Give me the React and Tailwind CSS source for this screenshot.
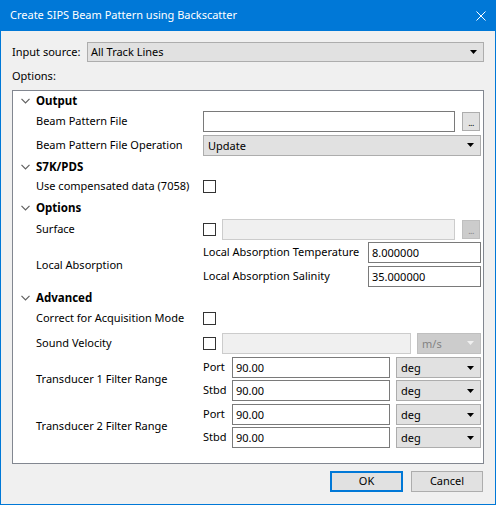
import React from "react";

const Arrow = ({ color = "#000" }) => (
  <svg width="7" height="4" viewBox="0 0 7 4" className="shrink-0">
    <polygon points="0,0 7,0 3.5,4" fill={color} />
  </svg>
);

const Chevron = () => (
  <svg width="9" height="6" viewBox="0 0 9 6">
    <path d="M0.5 0.8 L4.5 4.8 L8.5 0.8" fill="none" stroke="#606060" strokeWidth="1.2" />
  </svg>
);

const Combo = ({ value, className = "", disabled = false }) => (
  <div
    className={
      "h-[21px] flex items-center justify-between pl-[4px] pr-[6px] border " +
      (disabled
        ? "bg-[#cccccc] border-[#bfbfbf] text-[#838383] "
        : "bg-[#e1e1e1] border-[#adadad] text-black ") +
      className
    }
  >
    <span className="leading-none">{value}</span>
    <Arrow color={disabled ? "#f0f0f0" : "#000"} />
  </div>
);

const Input = ({ value = "", className = "", disabled = false }) => (
  <div
    className={
      "h-[21px] flex items-center pl-[3px] border " +
      (disabled ? "bg-[#f0f0f0] border-[#cccccc] " : "bg-white border-[#7a7a7a] ") +
      className
    }
  >
    <span className="leading-none">{value}</span>
  </div>
);

const Check = () => (
  <div className="w-[13px] h-[13px] border border-[#333333] bg-white shrink-0" />
);

const DotsBtn = ({ disabled = false }) => (
  <div
    className={
      "w-[18px] h-[19px] border flex items-end justify-center pb-[3px] shrink-0 " +
      (disabled ? "bg-[#cccccc] border-[#bfbfbf] text-[#838383]" : "bg-[#e1e1e1] border-[#adadad] text-black")
    }
  >
    <span className="text-[9px] leading-none tracking-[-0.5px]">...</span>
  </div>
);

const Heading = ({ title, h }) => (
  <div className={"flex items-center " + h}>
    <div className="w-[23px] flex justify-center pl-[2px]">
      <Chevron />
    </div>
    <span className="font-bold text-[11.5px]">{title}</span>
  </div>
);

const Row = ({ label, h, children }) => (
  <div className={"flex items-center " + h}>
    <div className="w-[23px]" />
    <div className="w-[167px]">{label}</div>
    <div className="w-[278px] flex items-center">{children}</div>
  </div>
);

export default function App() {
  return (
    <div
      className="w-[496px] h-[505px] bg-[#f0f0f0] border border-t-0 border-[#0078d7] flex flex-col text-[11px] text-black whitespace-nowrap"
      style={{ fontFamily: '"Noto Sans", "Liberation Sans", sans-serif' }}
    >
      {/* Title bar */}
      <div className="h-[31px] bg-[#0078d7] flex items-center justify-between pl-[9px] pr-[9px] text-white">
        <span className="text-[11px]">Create SIPS Beam Pattern using Backscatter</span>
        <svg width="10" height="10" viewBox="0 0 10 10">
          <path d="M0.5 0.5 L9.5 9.5 M9.5 0.5 L0.5 9.5" stroke="#fff" strokeWidth="1" />
        </svg>
      </div>

      {/* Body */}
      <div className="flex flex-col pl-[11px] pr-[11px]">
        <div className="flex items-center mt-[11px] h-[20px]">
          <span className="w-[75px]">Input source:</span>
          <div className="flex-1 h-[20px] flex items-center justify-between pl-[3px] pr-[6px] border border-[#adadad] bg-[#e1e1e1]">
            <span>All Track Lines</span>
            <Arrow />
          </div>
        </div>
        <div className="h-[28px] flex items-center">Options:</div>

        {/* Property grid */}
        <div className="h-[374px] bg-white border border-[#828790] flex flex-col">
          <Heading title="Output" h="h-[19px]" />
          <Row label="Beam Pattern File" h="h-[22px]">
            <Input className="flex-1" />
            <div className="w-[7px]" />
            <DotsBtn />
            <div className="w-[1px]" />
          </Row>
          <Row label="Beam Pattern File Operation" h="h-[26px]">
            <Combo value="Update" className="flex-1" />
          </Row>
          <Heading title="S7K/PDS" h="h-[17px]" />
          <Row label="Use compensated data (7058)" h="h-[23px]">
            <Check />
          </Row>
          <Heading title="Options" h="h-[20px]" />
          <Row label="Surface" h="h-[22px]">
            <Check />
            <div className="w-[6px]" />
            <Input disabled className="flex-1" />
            <div className="w-[7px]" />
            <DotsBtn disabled />
            <div className="w-[1px]" />
          </Row>
          <div className="flex items-center h-[48px]">
            <div className="w-[23px]" />
            <div className="w-[167px] pt-[3px]">Local Absorption</div>
            <div className="w-[278px] flex flex-col">
              <div className="h-[24px] flex items-center">
                <span className="w-[165px]">Local Absorption Temperature</span>
                <Input value="8.000000" className="flex-1" />
              </div>
              <div className="h-[24px] flex items-center">
                <span className="w-[165px]">Local Absorption Salinity</span>
                <Input value="35.000000" className="flex-1" />
              </div>
            </div>
          </div>
          <Heading title="Advanced" h="h-[19px]" />
          <Row label="Correct for Acquisition Mode" h="h-[23px]">
            <Check />
          </Row>
          <Row label="Sound Velocity" h="h-[26px]">
            <Check />
            <div className="w-[6px]" />
            <Input disabled className="w-[189px]" />
            <div className="w-[6px]" />
            <Combo value="m/s" disabled className="flex-1" />
          </Row>
          {["Transducer 1 Filter Range", "Transducer 2 Filter Range"].map((t, i) => (
            <div key={t} className={"flex items-center h-[46px] " + (i === 1 ? "mt-[1px]" : "")}>
              <div className="w-[23px]" />
              <div className="w-[167px]">{t}</div>
              <div className="w-[278px] flex flex-col">
                {["Port", "Stbd"].map((s) => (
                  <div key={s} className="h-[23px] flex items-center">
                    <span className="w-[29px]">{s}</span>
                    <Input value="90.00" className="w-[158px]" />
                    <div className="w-[6px]" />
                    <Combo value="deg" className="flex-1" />
                  </div>
                ))}
              </div>
            </div>
          ))}
        </div>

        {/* Buttons */}
        <div className="flex justify-end mt-[7px] pr-[1px] gap-[8px]">
          <div className="w-[73px] h-[21px] border-2 border-[#0078d7] bg-[#e1e1e1] flex items-center justify-center">
            OK
          </div>
          <div className="w-[72px] h-[21px] border border-[#adadad] bg-[#e1e1e1] flex items-center justify-center">
            Cancel
          </div>
        </div>
      </div>
    </div>
  );
}
